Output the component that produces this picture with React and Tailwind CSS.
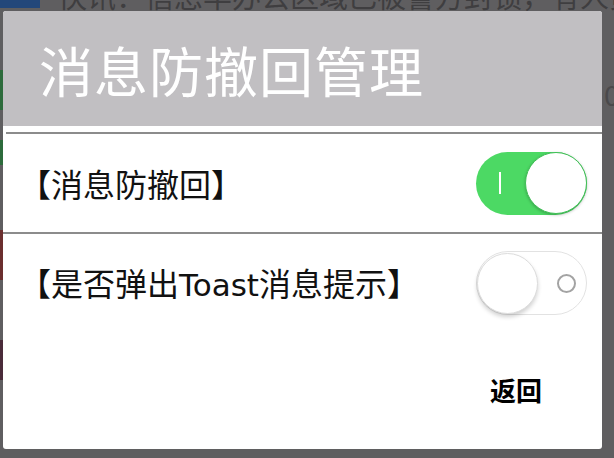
import { useState } from "react";

const CJK = { fontFamily: '"Noto Sans CJK SC", "Noto Sans", sans-serif' };

function Toggle({ on, onClick }) {
    if (on) {
        return (
            <button
                onClick={onClick}
                className="relative w-[111px] h-[63px] rounded-full bg-[#4cd964] flex items-center justify-end"
            >
                <span className="absolute left-[23px] top-[20px] w-[2px] h-[22px] bg-white" />
                <span className="w-[62px] h-[62px] rounded-full bg-white border border-[#3fbf55] shadow-[0_1px_3px_rgba(0,0,0,0.25)]" />
            </button>
        );
    }
    return (
        <button
            onClick={onClick}
            className="relative w-[111px] h-[64px] rounded-full bg-white border border-[#e2e2e2] flex items-center"
        >
            <span className="w-[61px] h-[61px] rounded-full bg-white border border-[#dcdcdc] shadow-[0_3px_4px_rgba(0,0,0,0.18)]" />
            <span className="absolute left-[80px] top-[22px] w-[19px] h-[19px] rounded-full border-2 border-[#a3a3a3]" />
        </button>
    );
}

export default function App() {
    const [antiRecall, setAntiRecall] = useState(true);
    const [showToast, setShowToast] = useState(false);

    return (
        <div className="relative w-[614px] h-[458px] overflow-hidden bg-[#5f5e60] pt-[11px] pl-[3px]" style={CJK}>
            {/* dimmed page behind the dialog */}
            <div className="absolute left-0 top-0 w-[40px] h-[8px] bg-[#23477a]" />
            <div className="absolute left-[58px] top-[-19px] whitespace-nowrap text-[29px] leading-none text-[#3f3e40]">
                快讯：信息丰办公区域已被警方封锁，有人员被带离
            </div>
            <div className="absolute left-0 top-[70px] w-[3px] h-[40px] bg-[#2d6b3c]" />
            <div className="absolute left-0 top-[140px] w-[3px] h-[25px] bg-[#2d6b3c]" />
            <div className="absolute left-0 top-[230px] w-[3px] h-[50px] bg-[#6b2f2f]" />
            <div className="absolute left-0 top-[340px] w-[3px] h-[40px] bg-[#4a2b3a]" />
            <div className="absolute left-[604px] top-[80px] text-[28px] leading-none text-[#4a494b]">0</div>

            {/* dialog */}
            <div className="relative w-[599px] h-[438px] rounded-[3px] bg-white overflow-hidden flex flex-col">
                <div className="h-[115px] bg-[#c1bfc2] flex items-center pl-[36px] pt-[2px]">
                    <h1 className="text-[54px] leading-none text-white font-normal tracking-[1px]">消息防撤回管理</h1>
                </div>
                <div className="h-[6px]" />
                <div className="h-[2px] ml-[3px] bg-[#8c8c8c]" />

                <div className="h-[98px] flex items-center justify-between pl-[16px] pr-[15px]">
                    <span className="text-[32px] leading-none text-[#111]">【消息防撤回】</span>
                    <Toggle on={antiRecall} onClick={() => setAntiRecall(!antiRecall)} />
                </div>
                <div className="h-[2px] bg-[#8c8c8c]" />

                <div className="h-[98px] flex items-center justify-between pl-[16px] pr-[15px]">
                    <span className="text-[32px] leading-none text-[#111]">
                        【是否弹出<span style={{ fontFamily: '"DejaVu Sans", sans-serif' }} className="text-[31px]">Toast</span>消息提示】
                    </span>
                    <Toggle on={showToast} onClick={() => setShowToast(!showToast)} />
                </div>

                <div className="flex-1 flex justify-end pt-[43px] pr-[60px]">
                    <button className="h-[30px] text-[26px] leading-none font-bold text-black">返回</button>
                </div>
            </div>
        </div>
    );
}
